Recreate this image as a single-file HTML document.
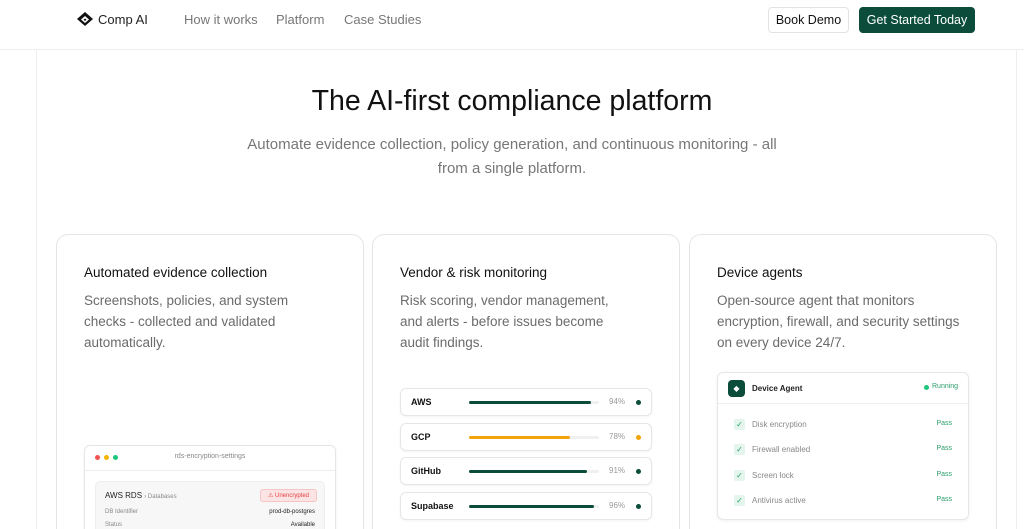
<!DOCTYPE html>
<html><head><style>
*{box-sizing:border-box;margin:0;padding:0}
html,body{width:1024px;height:529px;overflow:hidden}
body{background:#fff;font-family:"Liberation Sans",sans-serif;color:#111;position:relative}
.nav{height:50px;border-bottom:1px solid #eee;position:relative}
.abs{position:absolute}
.vl{position:absolute;top:50px;bottom:0;width:1px;background:#eee}
.card{position:absolute;top:234px;width:308px;height:320px;border:1px solid #e5e5e5;border-radius:12px;background:#fff}
.card h3{position:absolute;left:27px;top:30px;font-size:13.5px;font-weight:normal;color:#111}
.card p{position:absolute;left:27px;top:55px;width:230px;font-size:13.5px;line-height:21px;color:#6b6b6b}
.row{position:absolute;left:27px;width:252px;height:28px;border:1px solid #e6e6e6;border-radius:6px;box-shadow:0 1px 2px rgba(0,0,0,.05);font-size:9px}
.row b{position:absolute;left:10px;top:8px}
.track{position:absolute;left:68px;top:12px;width:130px;height:3px;background:#f0f0f0;border-radius:2px}
.fill{height:3px;border-radius:2px;background:#0b4d3a}
.pct{position:absolute;left:208px;top:8px;color:#999;font-size:8px}
.dot{position:absolute;left:235px;top:11px;width:5px;height:5px;border-radius:50%;background:#0b4d3a}
.chk{position:absolute;left:16px;width:11px;height:11px;background:#e3f5ec;border-radius:2px;color:#2a9d6a;font-size:8px;text-align:center;line-height:11px}
.lab{position:absolute;left:34px;font-size:8px;color:#888}
.pass{position:absolute;right:16px;font-size:7px;color:#2a9d6a}
</style></head><body>
<div class="nav">
<svg class="abs" style="left:76px;top:11px" width="18" height="18" viewBox="0 0 18 18"><path d="M9 1L17 8L9 15L1 8Z" fill="#111"/><path d="M9 5L13 8.5L9 12L5 8.5Z" fill="#fff"/><path d="M9 7.5L10.5 8.8L9 10L7.5 8.8Z" fill="#111"/></svg>
<div class="abs" style="left:98px;top:12px;font-size:13px;color:#222">Comp AI</div>
<div class="abs" style="left:184px;top:12px;font-size:13px;color:#777">How it works</div>
<div class="abs" style="left:276px;top:12px;font-size:13px;color:#777">Platform</div>
<div class="abs" style="left:344px;top:12px;font-size:13px;color:#777">Case Studies</div>
<div class="abs" style="left:768px;top:7px;width:81px;height:26px;border:1px solid #e3e3e3;border-radius:4px;font-size:12.5px;text-align:center;line-height:24px;color:#111">Book Demo</div>
<div class="abs" style="left:859px;top:7px;width:116px;height:26px;background:#0b4d3a;border-radius:4px;font-size:12.5px;text-align:center;line-height:26px;color:#fff">Get Started Today</div>
</div>
<div class="vl" style="left:36px"></div><div class="vl" style="left:1016px"></div>
<div class="abs" style="left:0;width:1024px;top:85px;text-align:center;font-size:28.5px;color:#111">The AI-first compliance platform</div>
<div class="abs" style="left:236px;width:552px;top:133px;text-align:center;font-size:15px;line-height:24px;color:#777">Automate evidence collection, policy generation, and continuous monitoring - all from a single platform.</div>

<div class="card" style="left:56px">
<h3>Automated evidence collection</h3>
<p>Screenshots, policies, and system checks - collected and validated automatically.</p>
<div class="abs" style="left:27px;top:210px;width:252px;height:100px;border:1px solid #e6e6e6;border-radius:6px;box-shadow:0 1px 3px rgba(0,0,0,.05)">
<div class="abs" style="left:10px;top:9px;width:5px;height:5px;border-radius:50%;background:#f05252"></div>
<div class="abs" style="left:19px;top:9px;width:5px;height:5px;border-radius:50%;background:#f5b400"></div>
<div class="abs" style="left:28px;top:9px;width:5px;height:5px;border-radius:50%;background:#1ec47a"></div>
<div class="abs" style="left:0;width:250px;top:7px;text-align:center;font-size:7px;color:#888">rds-encryption-settings</div>
<div class="abs" style="left:0;width:250px;top:24px;border-top:1px solid #eee"></div>
<div class="abs" style="left:10px;top:35px;width:230px;height:70px;background:#f7f7f7;border:1px solid #eee;border-radius:5px">
<div class="abs" style="left:9px;top:9px;font-size:8px;color:#222">AWS RDS <span style="font-size:6px;color:#888">› Databases</span></div>
<div class="abs" style="left:164px;top:7px;width:57px;height:13px;background:#fde4e4;border:1px solid #f5c5c5;border-radius:3px;font-size:6px;color:#e03e3e;text-align:center;line-height:12px">⚠ Unencrypted</div>
<div class="abs" style="left:9px;top:27px;font-size:6px;color:#888">DB Identifier</div>
<div class="abs" style="right:9px;top:27px;font-size:6px;color:#222">prod-db-postgres</div>
<div class="abs" style="left:9px;top:40px;font-size:6px;color:#888">Status</div>
<div class="abs" style="right:9px;top:40px;font-size:6px;color:#222">Available</div>
</div></div>
</div>

<div class="card" style="left:372px">
<h3>Vendor &amp; risk monitoring</h3>
<p>Risk scoring, vendor management, and alerts - before issues become audit findings.</p>
<div class="row" style="top:153px"><b>AWS</b><div class="track"><div class="fill" style="width:122px"></div></div><span class="pct">94%</span><div class="dot"></div></div>
<div class="row" style="top:188px"><b>GCP</b><div class="track"><div class="fill" style="width:101px;background:#f5a30b"></div></div><span class="pct">78%</span><div class="dot" style="background:#f5a30b"></div></div>
<div class="row" style="top:222px"><b>GitHub</b><div class="track"><div class="fill" style="width:118px"></div></div><span class="pct">91%</span><div class="dot"></div></div>
<div class="row" style="top:257px"><b>Supabase</b><div class="track"><div class="fill" style="width:125px"></div></div><span class="pct">96%</span><div class="dot"></div></div>
</div>

<div class="card" style="left:689px">
<h3>Device agents</h3>
<p style="width:255px">Open-source agent that monitors encryption, firewall, and security settings on every device 24/7.</p>
<div class="abs" style="left:27px;top:137px;width:252px;height:148px;border:1px solid #e6e6e6;border-radius:6px;box-shadow:0 1px 3px rgba(0,0,0,.06)">
<div class="abs" style="left:10px;top:7px;width:17px;height:17px;background:#0b4d3a;border-radius:4px;color:#fff;font-size:8px;text-align:center;line-height:17px">◆</div>
<div class="abs" style="left:34px;top:11px;font-size:8px;font-weight:bold;color:#222">Device Agent</div>
<div class="abs" style="left:206px;top:12px;width:5px;height:5px;border-radius:50%;background:#1ec47a"></div>
<div class="abs" style="left:214px;top:10px;font-size:7px;color:#2a9d6a">Running</div>
<div class="abs" style="left:0;width:250px;top:30px;border-top:1px solid #eee"></div>
<div class="chk" style="top:46px">✓</div><div class="lab" style="top:47px">Disk encryption</div><div class="pass" style="top:47px">Pass</div>
<div class="chk" style="top:71px">✓</div><div class="lab" style="top:72px">Firewall enabled</div><div class="pass" style="top:72px">Pass</div>
<div class="chk" style="top:97px">✓</div><div class="lab" style="top:98px">Screen lock</div><div class="pass" style="top:98px">Pass</div>
<div class="chk" style="top:122px">✓</div><div class="lab" style="top:123px">Antivirus active</div><div class="pass" style="top:123px">Pass</div>
</div>
</div>
</body></html>
